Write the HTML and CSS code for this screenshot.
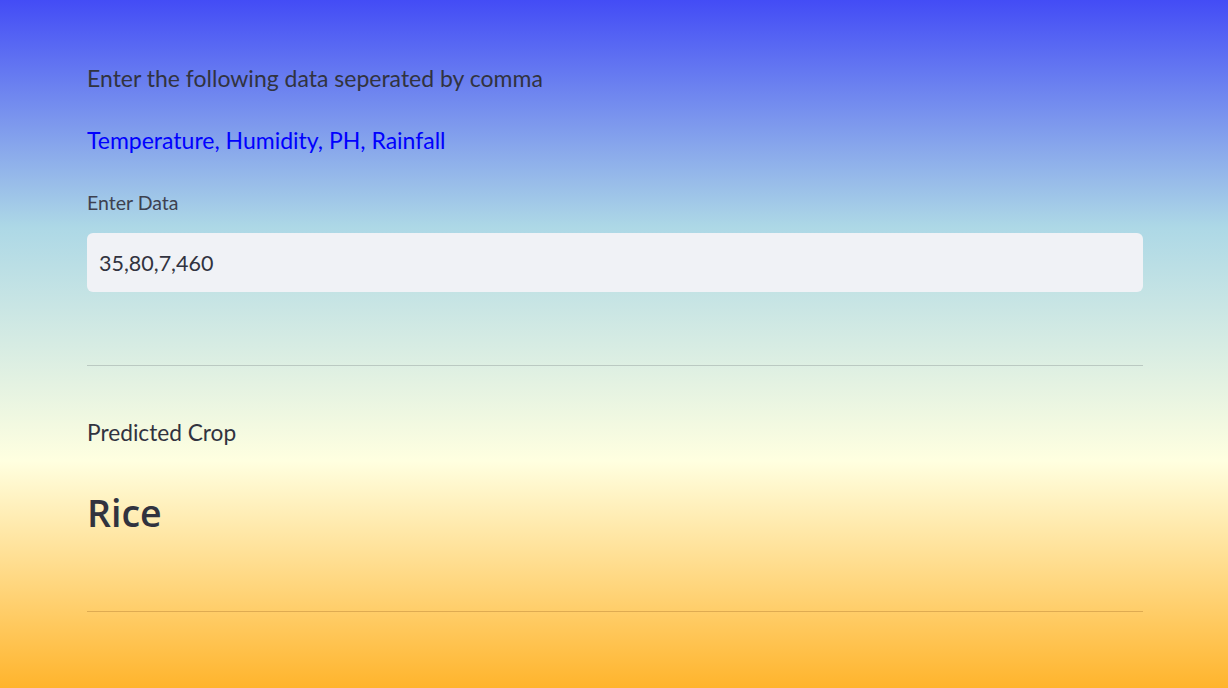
FILE: index.html
```html
<!DOCTYPE html>
<html>
<head>
<meta charset="utf-8">
<link rel="stylesheet" href="styles.css">
</head>
<body>
<main class="app">
  <div class="block">
    <p class="text">Enter the following data seperated by comma</p>
    <p class="text blue">Temperature, Humidity, PH, Rainfall</p>
    <label class="label" for="data">Enter Data</label>
    <input id="data" class="input" type="text" value="35,80,7,460">
    <hr class="rule rule-first">
    <p class="text result-label">Predicted Crop</p>
    <h2 class="result">Rice</h2>
    <hr class="rule rule-second">
  </div>
</main>
</body>
</html>
```

FILE: styles.css
```css
html, body {
  margin: 0;
  padding: 0;
  height: 100%;
}
body {
  font-family: Lato, "Open Sans", sans-serif;
  color: #31333f;
  background: linear-gradient(to bottom, #434cf6 0%, #add8e6 33%, #ffffe0 67%, #ffb42c 100%);
  overflow: hidden;
}
.app {
  height: 688px;
  display: flex;
  padding-left: 87px;
}
.block {
  width: 1056px;
  display: flex;
  flex-direction: column;
  padding-top: 63px;
}
.text {
  margin: 0;
  font-size: 23px;
  line-height: 30px;
}
.blue {
  color: #0000ff;
  margin-top: 32px;
}
.label {
  margin-top: 36px;
  font-size: 19.5px;
  line-height: 24px;
  color: #3d4150;
}
.input {
  margin-top: 18px;
  height: 59px;
  box-sizing: border-box;
  border: none;
  border-radius: 6px;
  background: #f0f2f6;
  padding: 0 12px;
  font-family: inherit;
  font-size: 21.5px;
  color: #31333f;
  outline: none;
}
.rule {
  border: none;
  height: 1px;
  margin: 0;
}
.rule-first {
  margin-top: 73px;
  background: rgba(49, 51, 63, 0.2);
}
.result-label {
  margin-top: 52px;
  font-size: 22.7px;
}
.result {
  margin: 38px 0 0;
  font-family: "Open Sans", sans-serif;
  font-size: 37.5px;
  line-height: 54px;
  font-weight: 600;
}
.rule-second {
  margin-top: 71px;
  background: rgba(160, 110, 40, 0.35);
}
```
